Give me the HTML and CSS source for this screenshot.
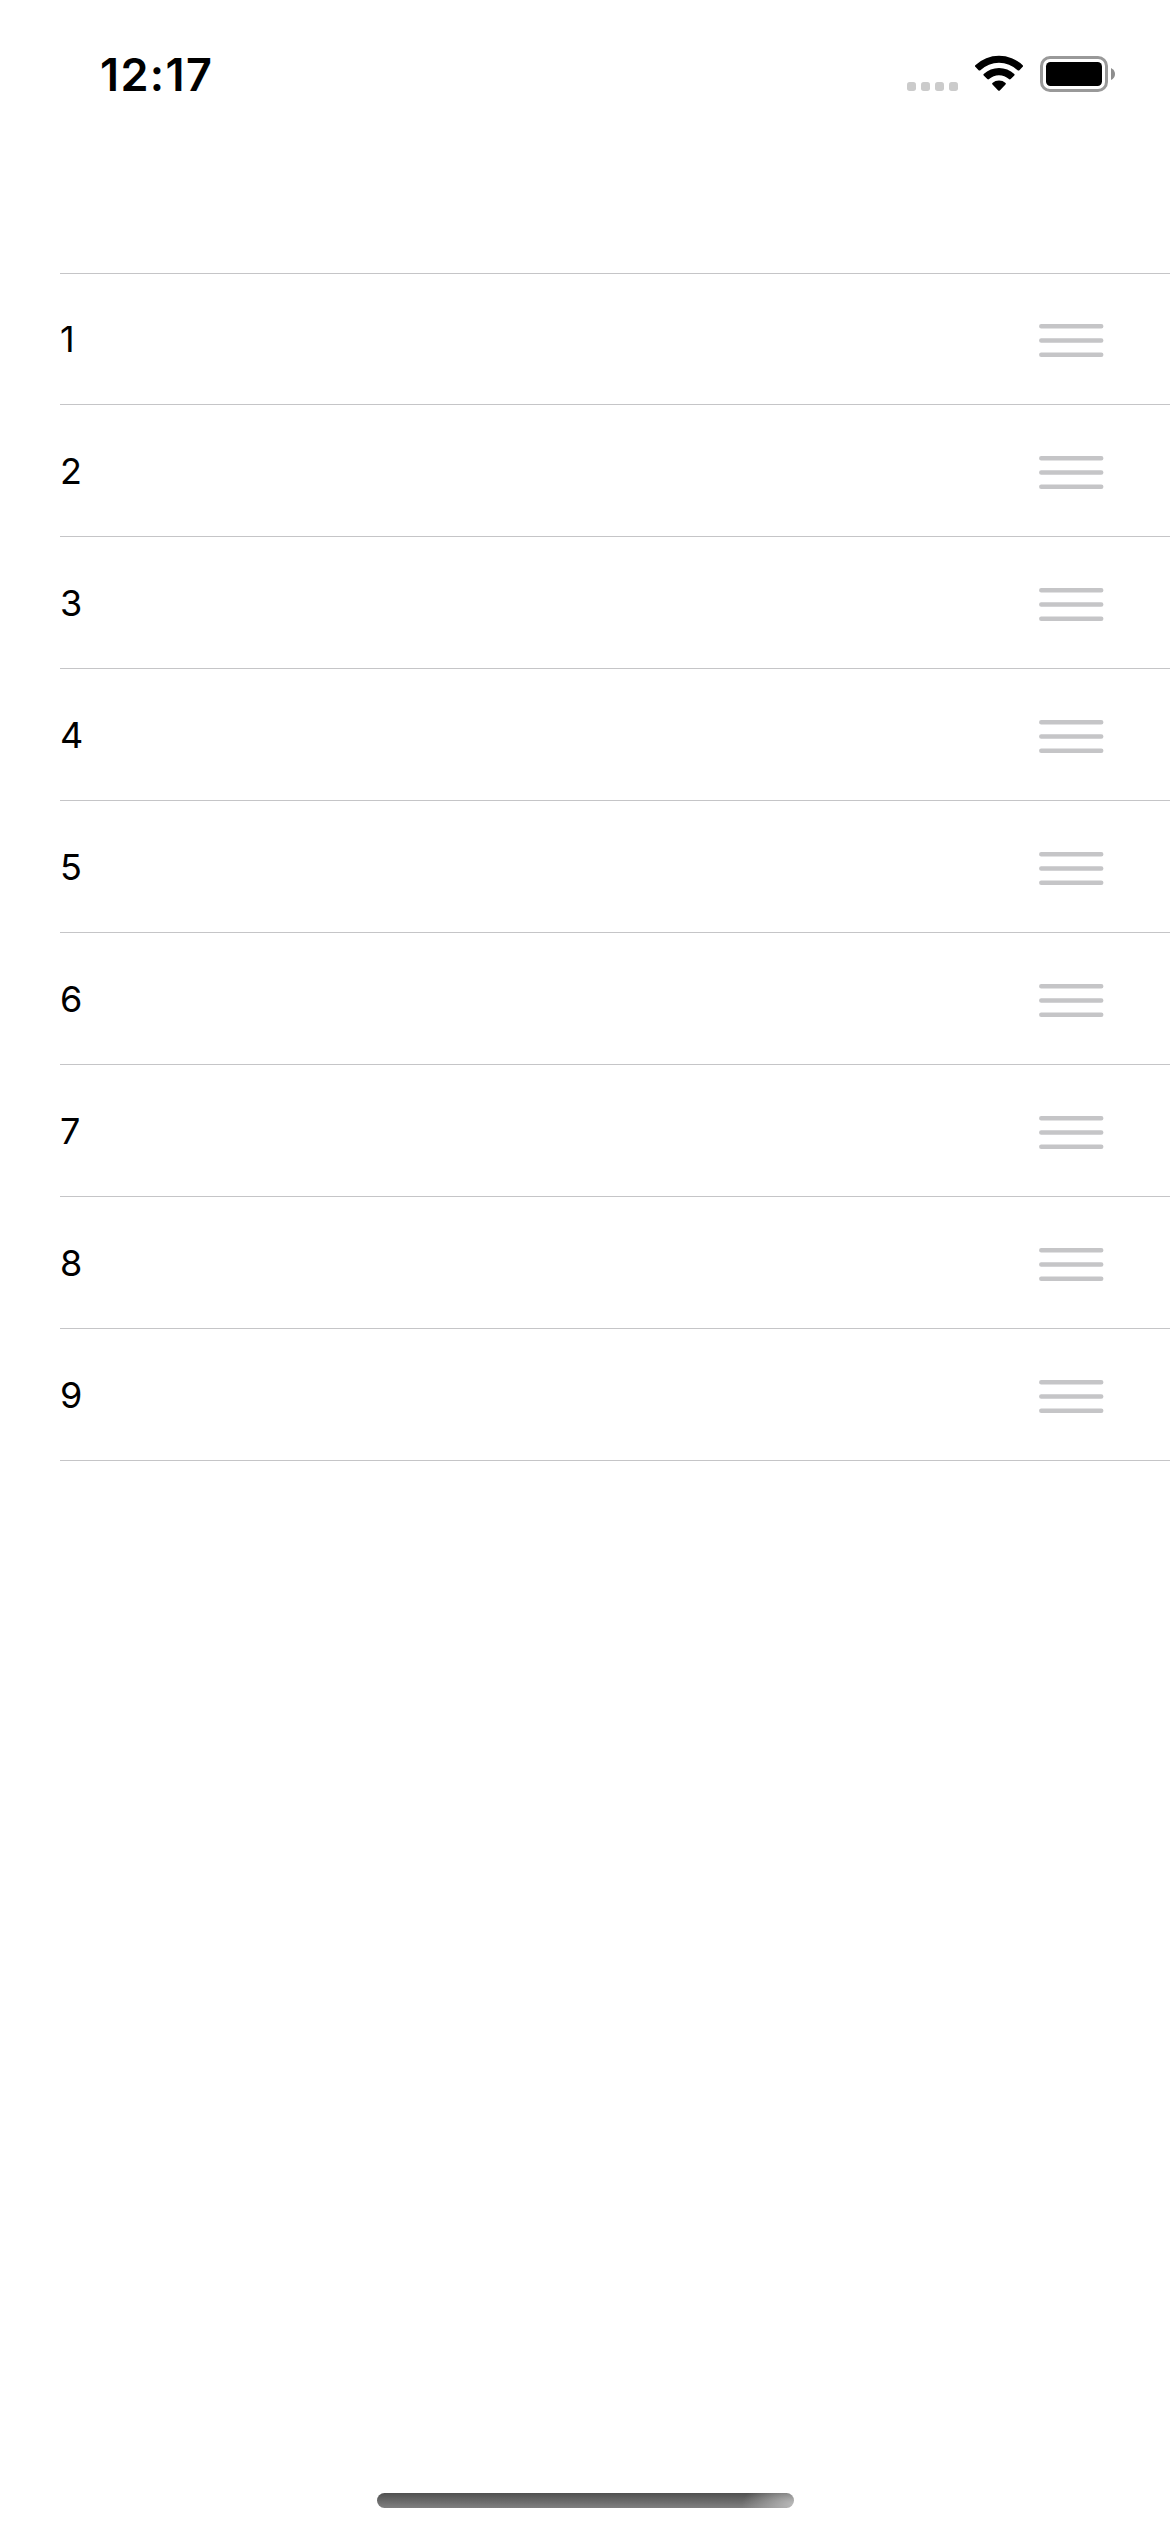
FILE: index.html
```html
<!DOCTYPE html>
<html lang="en">
<head>
<meta charset="utf-8">
<title>List</title>
<link rel="stylesheet" href="styles.css">
</head>
<body>
<header class="status">
  <span class="time">12:17</span>
  <svg class="indicators" width="212" height="40" viewBox="905 54 212 40" aria-hidden="true">
    <g fill="#cbcbcb">
      <rect x="907" y="82" width="9" height="9" rx="2.7"/>
      <rect x="921" y="82" width="9" height="9" rx="2.7"/>
      <rect x="935" y="82" width="9" height="9" rx="2.7"/>
      <rect x="949" y="82" width="9" height="9" rx="2.7"/>
    </g>
    <path d="M975.3 65.2Q974.5 66 975.3 66.8L978.6 70.2Q979.5 71 980.4 70.2A27 27 0 0 1 1017.6 70.2Q1018.5 71 1019.4 70.2L1022.7 66.8Q1023.5 66 1022.7 65.2A34.5 34.5 0 0 0 975.3 65.2Z"/>
    <path d="M983.7 74Q982.9 74.8 983.7 75.6L987.3 79.1Q988.2 79.9 989.1 79.1A14.8 14.8 0 0 1 1008.9 79.1Q1009.8 79.9 1010.7 79.1L1014.3 75.6Q1015.1 74.8 1014.3 74A22.3 22.3 0 0 0 983.7 74Z"/>
    <path d="M992.4 83Q991.7 83.8 992.5 84.6L998.2 90.4Q999 91.2 999.8 90.4L1005.5 84.6Q1006.3 83.8 1005.6 83A10.3 10.3 0 0 0 992.4 83Z"/>
    <rect x="1041.5" y="57.5" width="65" height="33" rx="8.5" fill="none" stroke="#999" stroke-width="3"/>
    <rect x="1046" y="62" width="56" height="24" rx="4.5"/>
    <path d="M1111 68V80Q1115 78 1115 74Q1115 70 1111 68Z" fill="#8e8e8e"/>
  </svg>
</header>
<main class="list">
  <div class="row"><span>1</span><svg class="handle" viewBox="0 0 65 34"><path d="M2.25 2.2H62.25M2.25 16.5H62.25M2.25 30.8H62.25"/></svg></div>
  <div class="row"><span>2</span><svg class="handle" viewBox="0 0 65 34"><path d="M2.25 2.2H62.25M2.25 16.5H62.25M2.25 30.8H62.25"/></svg></div>
  <div class="row"><span>3</span><svg class="handle" viewBox="0 0 65 34"><path d="M2.25 2.2H62.25M2.25 16.5H62.25M2.25 30.8H62.25"/></svg></div>
  <div class="row"><span>4</span><svg class="handle" viewBox="0 0 65 34"><path d="M2.25 2.2H62.25M2.25 16.5H62.25M2.25 30.8H62.25"/></svg></div>
  <div class="row"><span>5</span><svg class="handle" viewBox="0 0 65 34"><path d="M2.25 2.2H62.25M2.25 16.5H62.25M2.25 30.8H62.25"/></svg></div>
  <div class="row"><span>6</span><svg class="handle" viewBox="0 0 65 34"><path d="M2.25 2.2H62.25M2.25 16.5H62.25M2.25 30.8H62.25"/></svg></div>
  <div class="row"><span>7</span><svg class="handle" viewBox="0 0 65 34"><path d="M2.25 2.2H62.25M2.25 16.5H62.25M2.25 30.8H62.25"/></svg></div>
  <div class="row"><span>8</span><svg class="handle" viewBox="0 0 65 34"><path d="M2.25 2.2H62.25M2.25 16.5H62.25M2.25 30.8H62.25"/></svg></div>
  <div class="row"><span>9</span><svg class="handle" viewBox="0 0 65 34"><path d="M2.25 2.2H62.25M2.25 16.5H62.25M2.25 30.8H62.25"/></svg></div>
</main>
<footer class="home"><div class="home-bar"></div></footer>
</body>
</html>
```
FILE: styles.css
```css
* {
  box-sizing: border-box;
}

body {
  margin: 0;
  height: 2532px;
  display: flex;
  flex-direction: column;
  background: #fff;
  color: #000;
  font-family: Inter, "Liberation Sans", sans-serif;
}

.status {
  height: 273px;
  flex: none;
  display: flex;
  justify-content: space-between;
  align-items: flex-start;
  padding: 54px 53px 0 100px;
}

.time {
  font-size: 45px;
  line-height: 42px;
  font-weight: 600;
  letter-spacing: 1.4px;
}

.list {
  padding-left: 60px;
}

.row {
  height: 132px;
  display: flex;
  align-items: center;
  justify-content: space-between;
  padding: 1px 66px 0 0;
  border-bottom: 1px solid #c5c5c7;
  font-size: 36px;
  line-height: 44px;
}

.row:first-child {
  padding-top: 0;
  border-top: 1px solid #c5c5c7;
}

.handle {
  width: 65px;
  height: 34px;
  margin-top: 4px;
  fill: none;
  stroke: #c5c5c7;
  stroke-width: 4.4;
  stroke-linecap: round;
}

.home {
  margin-top: auto;
  padding: 0 0 24px 1px;
  display: flex;
  justify-content: center;
}

.home-bar {
  width: 417px;
  height: 15px;
  border-radius: 7.5px;
  background:
    radial-gradient(ellipse 52px 24px at 100% 75%, rgba(190, 190, 190, .95), rgba(180, 180, 180, 0)),
    linear-gradient(#505050, #808080);
}
```
